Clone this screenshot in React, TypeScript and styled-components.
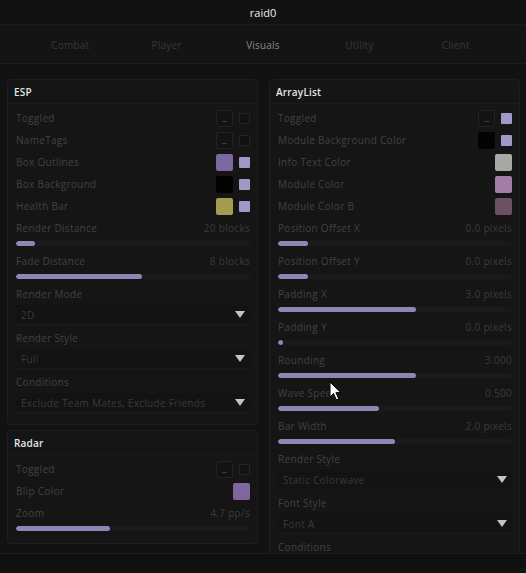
import React from "react";
import styled, { createGlobalStyle } from "styled-components";

const GlobalStyle = createGlobalStyle`
  html, body {
    margin: 0;
    padding: 0;
    background: #111111;
  }
  * {
    box-sizing: border-box;
  }
`;

const Screen = styled.div`
  position: relative;
  width: 526px;
  height: 573px;
  overflow: hidden;
  display: flex;
  flex-direction: column;
  background: #121212;
  font-family: "Open Sans", "Liberation Sans", sans-serif;
`;

const TitleBar = styled.div`
  height: 25px;
  display: flex;
  align-items: center;
  justify-content: center;
  background: #121212;
  border-bottom: 1px solid #1b1b1b;
  color: #ececec;
  font-size: 11px;
  font-weight: 500;
`;

const TabBar = styled.div`
  height: 39px;
  padding: 2px 22px 0;
  display: grid;
  grid-template-columns: repeat(5, 1fr);
  background: #141414;
  border-bottom: 1px solid #1d1d1d;
`;

const Tab = styled.div<{ $active?: boolean }>`
  display: flex;
  align-items: center;
  justify-content: center;
  font-size: 10px;
  letter-spacing: 0.2px;
  color: ${(p) => (p.$active ? "#8a8a8a" : "#373737")};
`;

const Content = styled.div`
  flex: 1;
  min-height: 0;
  overflow: hidden;
  display: grid;
  grid-template-columns: 1fr 1fr;
  column-gap: 11px;
  padding: 15px 6px 0 7px;
`;

const Column = styled.div`
  display: flex;
  flex-direction: column;
  gap: 5px;
  min-width: 0;
`;

const Panel = styled.div`
  background: #151515;
  border: 1px solid #1e1e1e;
  border-radius: 4px;
  flex-shrink: 0;
`;

const PanelHeader = styled.div`
  height: 24px;
  display: flex;
  align-items: center;
  padding: 0 6px;
  border-bottom: 1px solid #1c1c1c;
  color: #e6e6e6;
  font-size: 10px;
  font-weight: 600;
  letter-spacing: 0.2px;
`;

const PanelBody = styled.div<{ $bottom: number }>`
  padding: 3px 7px ${(p) => p.$bottom}px 8px;
`;

const Row = styled.div`
  height: 22px;
  display: flex;
  align-items: center;
  justify-content: space-between;
`;

const Label = styled.span`
  font-size: 10px;
  letter-spacing: 0.3px;
  color: #424242;
  white-space: nowrap;
`;

const Value = styled.span`
  font-size: 10px;
  letter-spacing: 0.3px;
  color: #3b3b3b;
  white-space: nowrap;
`;

const Swatches = styled.div`
  display: flex;
  align-items: center;
  gap: 6px;
`;

const BigSwatch = styled.div<{ $color?: string }>`
  width: 17px;
  height: 17px;
  border-radius: 2px;
  background: ${(p) => p.$color ?? "#131313"};
  border: 1px solid ${(p) => (p.$color ? "transparent" : "#222222")};
  display: flex;
  align-items: flex-end;
  justify-content: center;
  padding-bottom: 4px;
`;

const Dash = styled.span`
  width: 5px;
  height: 1px;
  background: #3a3a3a;
`;

const SmallSwatch = styled.div<{ $color?: string }>`
  width: 11px;
  height: 11px;
  border-radius: 1px;
  background: ${(p) => p.$color ?? "#121212"};
  border: 1px solid ${(p) => (p.$color ? "transparent" : "#242424")};
`;

const Track = styled.div`
  height: 5px;
  margin: 2px 0 4px;
  border-radius: 3px;
  background: #1a1a1a;
  overflow: hidden;
`;

const Fill = styled.div`
  height: 100%;
  min-width: 5px;
  border-radius: 3px;
  background: #8b88b6;
`;

const Select = styled.div`
  height: 20px;
  margin-bottom: 2px;
  display: flex;
  align-items: center;
  justify-content: space-between;
  padding: 0 5px;
  background: #131313;
  border-bottom: 1px solid #1a1a1a;
`;

const SelectText = styled.span`
  font-size: 10px;
  letter-spacing: 0.3px;
  color: #3a3a3a;
  white-space: nowrap;
`;

const Footer = styled.div`
  height: 20px;
  flex-shrink: 0;
  background: #0f0f0f;
  border-top: 1px solid #1c1c1c;
  border-bottom: 5px solid #11150e;
`;

const Cursor = styled.svg`
  position: absolute;
  left: 329px;
  top: 381px;
  width: 13px;
  height: 20px;
`;

type Swatch = { color?: string; dash?: boolean };

const ColorRow = ({ label, big, small }: { label: string; big: Swatch; small?: Swatch }) => (
  <Row>
    <Label>{label}</Label>
    <Swatches>
      <BigSwatch $color={big.color}>{big.dash && <Dash />}</BigSwatch>
      {small && <SmallSwatch $color={small.color} />}
    </Swatches>
  </Row>
);

const Slider = ({ label, value, pct }: { label: string; value: string; pct: number }) => (
  <div>
    <Row>
      <Label>{label}</Label>
      <Value>{value}</Value>
    </Row>
    <Track>
      <Fill style={{ width: `${pct}%` }} />
    </Track>
  </div>
);

const Dropdown = ({ label, value }: { label: string; value?: string }) => (
  <div>
    <Row>
      <Label>{label}</Label>
    </Row>
    {value && (
      <Select>
        <SelectText>{value}</SelectText>
        <svg width="10" height="7" viewBox="0 0 10 7">
          <path d="M0 0 H10 L5 7 Z" fill="#c4c4c4" />
        </svg>
      </Select>
    )}
  </div>
);

const LAV = "#9d9ac5";
const empty: Swatch = { dash: true };

export default function App() {
  return (
    <Screen>
      <GlobalStyle />
      <TitleBar>raid0</TitleBar>
      <TabBar>
        <Tab>Combat</Tab>
        <Tab>Player</Tab>
        <Tab $active>Visuals</Tab>
        <Tab>Utility</Tab>
        <Tab>Client</Tab>
      </TabBar>
      <Content>
        <Column>
          <Panel>
            <PanelHeader>ESP</PanelHeader>
            <PanelBody $bottom={9}>
              <ColorRow label="Toggled" big={empty} small={{}} />
              <ColorRow label="NameTags" big={empty} small={{}} />
              <ColorRow label="Box Outlines" big={{ color: "#7b689f" }} small={{ color: LAV }} />
              <ColorRow label="Box Background" big={{ color: "#030303" }} small={{ color: LAV }} />
              <ColorRow label="Health Bar" big={{ color: "#a39b4d" }} small={{ color: LAV }} />
              <Slider label="Render Distance" value="20 blocks" pct={8} />
              <Slider label="Fade Distance" value="8 blocks" pct={54} />
              <Dropdown label="Render Mode" value="2D" />
              <Dropdown label="Render Style" value="Full" />
              <Dropdown label="Conditions" value="Exclude Team Mates, Exclude Friends" />
            </PanelBody>
          </Panel>
          <Panel>
            <PanelHeader>Radar</PanelHeader>
            <PanelBody $bottom={8}>
              <ColorRow label="Toggled" big={empty} small={{}} />
              <ColorRow label="Blip Color" big={{ color: "#8065a0" }} />
              <Slider label="Zoom" value="4.7 pp/s" pct={40} />
            </PanelBody>
          </Panel>
        </Column>
        <Column>
          <Panel>
            <PanelHeader>ArrayList</PanelHeader>
            <PanelBody $bottom={9}>
              <ColorRow label="Toggled" big={empty} small={{ color: LAV }} />
              <ColorRow label="Module Background Color" big={{ color: "#030303" }} small={{ color: LAV }} />
              <ColorRow label="Info Text Color" big={{ color: "#a8a9a5" }} />
              <ColorRow label="Module Color" big={{ color: "#a47ca8" }} />
              <ColorRow label="Module Color B" big={{ color: "#6b5062" }} />
              <Slider label="Position Offset X" value="0.0 pixels" pct={13} />
              <Slider label="Position Offset Y" value="0.0 pixels" pct={13} />
              <Slider label="Padding X" value="3.0 pixels" pct={59} />
              <Slider label="Padding Y" value="0.0 pixels" pct={2} />
              <Slider label="Rounding" value="3.000" pct={59} />
              <Slider label="Wave Speed" value="0.500" pct={43} />
              <Slider label="Bar Width" value="2.0 pixels" pct={50} />
              <Dropdown label="Render Style" value="Static Colorwave" />
              <Dropdown label="Font Style" value="Font A" />
              <Dropdown label="Conditions" />
            </PanelBody>
          </Panel>
        </Column>
      </Content>
      <Footer />
      <Cursor viewBox="0 0 13 20">
        <path
          d="M1 1 L1 16 L4.5 12.5 L7.5 19 L9.8 18 L6.9 11.6 L11.8 11.6 Z"
          fill="#ffffff"
          stroke="#000000"
          strokeWidth="1"
          strokeLinejoin="round"
        />
      </Cursor>
    </Screen>
  );
}
